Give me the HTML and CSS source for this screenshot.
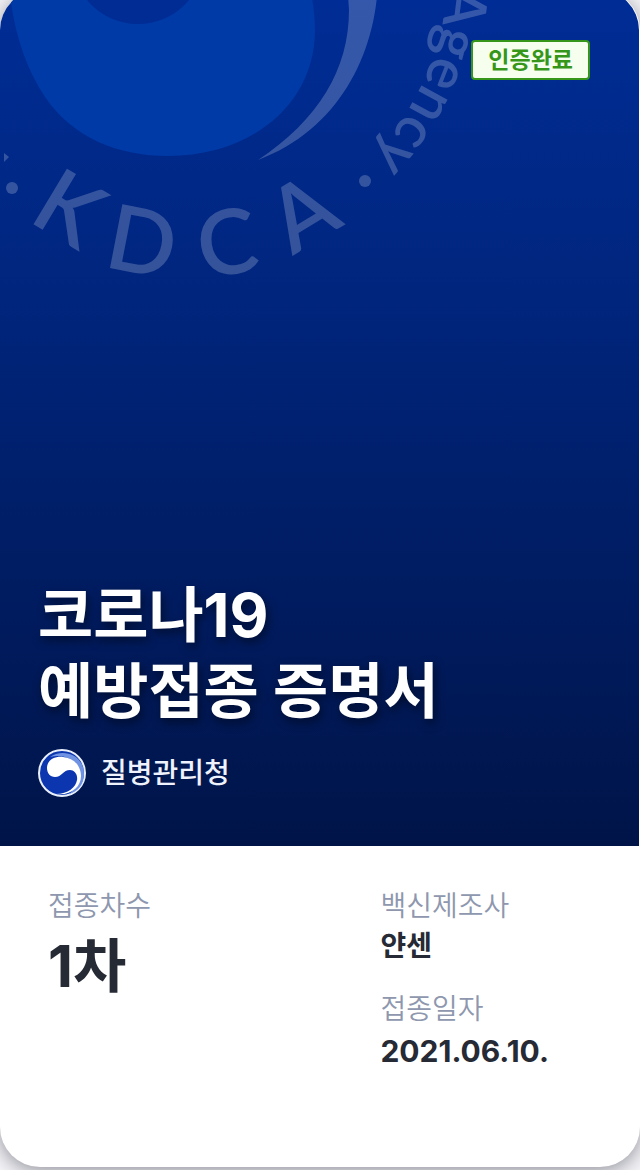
FILE: index.html
```html
<!DOCTYPE html>
<html lang="ko">

<head>
    <meta charset="UTF-8" />
    <meta name="viewport" content="width=device-width, initial-scale=1.0" />
    <title>코로나19 예방접종 증명서</title>
    <link rel="stylesheet" href="styles.css">
</head>

<body>
    <main class="card">
        <header class="cover">
            <svg class="watermark" viewBox="0 0 640 300" aria-hidden="true">
                <path class="ball" d="M8 -40C8 10 20 60 45 97C73 138 118 156 168 156C250 156 315 105 315 30C315 5 309 -20 300 -40Z" />
                <circle class="hole" cx="138" cy="-42" r="66" />
                <g class="mark">
                    <path d="M378 -20C376 55 338 130 258 160C318 120 349 70 349 10L347 -20Z" />
                    <path d="M4 153l5 4-5 5z" />
                    <circle cx="12" cy="188" r="6" />
                    <circle cx="365" cy="181" r="6" />
                    <g class="initials" transform="translate(185 -38)">
                        <text transform="translate(-132 274) rotate(31)">K</text>
                        <text transform="translate(-49 311) rotate(11)">D</text>
                        <text transform="translate(47 312) rotate(-9)">C</text>
                        <text transform="translate(134 278) rotate(-31)">A</text>
                    </g>
                    <path id="ring" class="ring" d="M185 -290A262 262 0 0 1 185 234" />
                    <text class="agency-ring"><textPath href="#ring" startOffset="520">Agency</textPath></text>
                </g>
            </svg>

            <span class="badge">인증완료</span>

            <div class="heading">
                <h1>코로나19<br>예방접종 증명서</h1>
                <p class="issuer">
                    <svg class="emblem" viewBox="0 0 48 48" aria-hidden="true">
                        <circle cx="24" cy="24" r="23" fill="#0b36b0" stroke="#e9effb" stroke-width="2" />
                        <path d="M12 8C24 -1 46 5 46 25C46 36 39 43 31 45C40 38 44 28 41 19C36 9 24 5 12 8Z" fill="#6f93e2" />
                        <path d="M9 19C9 11 17 7 25 8C36 9 43 17 43 27C43 38 33 47 18 45C30 45 38 38 39 31C40 25 36 21 32 21C25 21 24 28 17 28C12 28 9 24 9 19Z" fill="#fff" />
                    </svg>
                    <span>질병관리청</span>
                </p>
            </div>
        </header>

        <section class="details">
            <dl>
                <dt>접종차수</dt>
                <dd class="dose">1차</dd>
            </dl>
            <dl>
                <dt>백신제조사</dt>
                <dd>얀센</dd>
                <dt>접종일자</dt>
                <dd class="date">2021.06.10.</dd>
            </dl>
        </section>
    </main>
</body>

</html>
```
FILE: styles.css
```css
* {
    margin: 0;
    padding: 0;
    box-sizing: border-box;
}

body {
    font-family: Inter, "Noto Sans CJK KR", sans-serif;
    background-color: #f6f6f9;
    color: #262a35;
    overflow: hidden;
}

.card {
    margin: -10px 0 3px;
    background-color: #fff;
    border-radius: 40px;
    box-shadow: 0 4px 20px rgba(20, 20, 40, 0.45);
}

.cover {
    position: relative;
    display: flex;
    flex-direction: column;
    justify-content: space-between;
    min-height: 856px;
    margin-right: 1px;
    padding: 50px 49px 49px 38px;
    background: linear-gradient(#002d96, #002680 32%, #001448);
    border-radius: 40px 40px 0 0;
    overflow: hidden;
    color: #fff;
}

.watermark {
    position: absolute;
    top: 10px;
    left: 0;
    width: 640px;
    overflow: visible;
}

.ball {
    fill: #003aa6;
}

.hole {
    fill: #002c94;
}

.mark {
    fill: #fff;
    opacity: 0.21;
}

.initials {
    font-family: Lato, sans-serif;
    font-size: 90px;
    font-weight: 600;
    text-anchor: middle;
}

.ring {
    fill: none;
}

.agency-ring {
    font-family: Lato, sans-serif;
    font-size: 58px;
    font-weight: 600;
    text-anchor: middle;
}

.badge {
    position: relative;
    align-self: flex-end;
    padding: 0 15px;
    background-color: #f6ffee;
    border: 2px solid #35961a;
    border-radius: 4px;
    color: #35961a;
    font-size: 23px;
    font-weight: 700;
    line-height: 36px;
}

.heading {
    position: relative;
}

h1 {
    font-size: 60px;
    font-weight: 700;
    line-height: 76px;
    text-shadow: 2px 4px 10px rgba(0, 0, 0, 0.5);
}

.issuer {
    display: flex;
    gap: 15px;
    margin-top: 20px;
    color: #eef2fc;
    font-size: 28px;
    font-weight: 500;
    line-height: 48px;
}

.emblem {
    width: 48px;
    height: 48px;
}

.details {
    display: grid;
    grid-template-columns: 11fr 7fr;
    padding: 40px 48px 94px;
}

dt {
    color: #8e97ae;
    font-size: 28px;
    font-weight: 350;
    line-height: 40px;
}

dd {
    font-size: 28px;
    font-weight: 700;
    line-height: 40px;
}

dd + dt {
    margin-top: 23px;
}

.dose {
    font-size: 58px;
    line-height: 80px;
}

.date {
    font-size: 30px;
    line-height: 44px;
}
```
